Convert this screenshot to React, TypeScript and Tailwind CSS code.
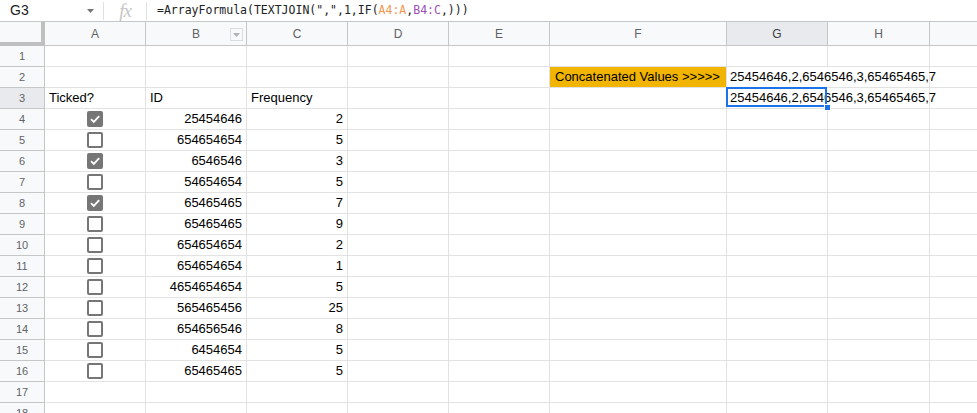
const COLS = ["A", "B", "C", "D", "E", "F", "G", "H", "I"];
const WIDTHS = [
  "w-[101px]",
  "w-[101px]",
  "w-[101px]",
  "w-[101px]",
  "w-[101px]",
  "w-[177px]",
  "w-[101px]",
  "w-[102px]",
  "w-[101px]",
];

const DATA: [boolean, string, string][] = [
  [true, "25454646", "2"],
  [false, "654654654", "5"],
  [true, "6546546", "3"],
  [false, "54654654", "5"],
  [true, "65465465", "7"],
  [false, "65465465", "9"],
  [false, "654654654", "2"],
  [false, "654654654", "1"],
  [false, "4654654654", "5"],
  [false, "565465456", "25"],
  [false, "654656546", "8"],
  [false, "6454654", "5"],
  [false, "65465465", "5"],
];

const CONCAT = "25454646,2,6546546,3,65465465,7";

function Checkbox({ checked }: { checked: boolean }) {
  if (checked) {
    return (
      <div className="w-[16px] h-[16px] rounded-[2px] bg-[#767676] flex items-center justify-center">
        <svg width="12" height="12" viewBox="0 0 12 12">
          <path d="M2 6.2 L4.8 9 L10.2 3.2" fill="none" stroke="#fff" strokeWidth="1.9" />
        </svg>
      </div>
    );
  }
  return <div className="w-[16px] h-[16px] rounded-[2px] border-2 border-[#767676]" />;
}

function cellContent(row: number, col: number) {
  // row 2: label + concatenated value
  if (row === 2 && col === 5)
    return <span className="pl-[5px]">Concatenated Values &gt;&gt;&gt;&gt;&gt;</span>;
  if ((row === 2 || row === 3) && col === 6)
    return <span className="pl-[3px] whitespace-nowrap">{CONCAT}</span>;
  if (row === 3) {
    if (col === 0) return <span className="pl-[4px]">Ticked?</span>;
    if (col === 1) return <span className="pl-[4px]">ID</span>;
    if (col === 2) return <span className="pl-[4px]">Frequency</span>;
  }
  if (row >= 4 && row <= 16) {
    const d = DATA[row - 4];
    if (col === 0)
      return (
        <div className="w-full flex justify-center">
          <Checkbox checked={d[0]} />
        </div>
      );
    if (col === 1) return <span className="w-full text-right pr-[4px]">{d[1]}</span>;
    if (col === 2) return <span className="w-full text-right pr-[4px]">{d[2]}</span>;
  }
  return null;
}

export default function App() {
  const rows = Array.from({ length: 18 }, (_, i) => i + 1);
  return (
    <div className="w-[977px] h-[413px] overflow-hidden bg-white font-['Liberation_Sans',Arial,sans-serif] text-[13px] text-black">
      {/* formula bar */}
      <div className="h-[22px] flex items-center border-b border-[#c4c7c5]">
        <div className="w-[103px] h-full flex items-center justify-between pl-[10px] pr-[9px]">
          <span className="text-[14px] text-[#202124]">G3</span>
          <svg width="7" height="4" viewBox="0 0 7 4">
            <path d="M0 0 L7 0 L3.5 4 Z" fill="#757575" />
          </svg>
        </div>
        <div className="w-px h-[18px] bg-[#e0e0e0]" />
        <div className="w-[42px] flex justify-center">
          <span className="font-['Liberation_Serif',serif] italic text-[19px] text-[#c6c6c6] leading-none tracking-[-1px]">
            fx
          </span>
        </div>
        <div className="w-px h-[18px] bg-[#e0e0e0]" />
        <div className="pl-[10px] font-['DejaVu_Sans_Mono',monospace] text-[11.5px] text-[#202124] whitespace-nowrap">
          =ArrayFormula(TEXTJOIN(",",1,IF(<span className="text-[#f1964f]">A4:A</span>,
          <span className="text-[#9b50b6]">B4:C</span>,)))
        </div>
      </div>

      {/* column headers */}
      <div className="h-[24px] flex bg-[#f8f9fa] text-[12px] text-[#5f6368]">
        <div className="w-[45px] shrink-0 border-r-4 border-b-4 border-[#bfbfbf]" />
        {COLS.map((c, i) => (
          <div
            key={c}
            className={`${WIDTHS[i]} shrink-0 flex items-center justify-center border-r border-b border-[#c4c7c5] ${
              i === 6 ? "bg-[#e8eaed] text-[#3c4043]" : ""
            } ${i === 1 ? "relative" : ""}`}
          >
            {/* column I is cut by the window edge, its letter is off-screen */}
            {i < 8 ? c : null}
            {i === 1 && (
              <div className="absolute right-[3px] top-[6px] w-[13px] h-[13px] border border-[#dadce0] bg-[#f8f9fa] flex items-center justify-center">
                <svg width="7" height="4" viewBox="0 0 7 4">
                  <path d="M0 0 L7 0 L3.5 4 Z" fill="#b0b3b8" />
                </svg>
              </div>
            )}
          </div>
        ))}
      </div>

      {/* rows */}
      {rows.map((r) => (
        <div key={r} className="h-[21px] flex">
          <div
            className={`w-[45px] shrink-0 flex items-center justify-center border-r border-b border-[#c4c7c5] text-[11px] text-[#5f6368] ${
              r === 3 ? "bg-[#e8eaed]" : "bg-[#f8f9fa]"
            }`}
          >
            {r}
          </div>
          {COLS.map((c, i) => {
            const overflow = (r === 2 || r === 3) && i === 6;
            const selected = r === 3 && i === 6;
            return (
              <div
                key={c}
                className={`${WIDTHS[i]} shrink-0 relative flex items-center border-b border-[#e2e2e3] ${
                  overflow ? "z-10" : "border-r"
                } ${r === 2 && i === 5 ? "bg-[#f1b400]" : ""}`}
              >
                {cellContent(r, i)}
                {selected && (
                  <>
                    <div className="absolute -left-px -top-px right-[1px] bottom-[1px] border-2 border-[#1a73e8]" />
                    <div className="absolute right-[-3px] bottom-[-3px] w-[7px] h-[7px] bg-[#1a73e8] border border-white" />
                  </>
                )}
              </div>
            );
          })}
        </div>
      ))}
    </div>
  );
}
